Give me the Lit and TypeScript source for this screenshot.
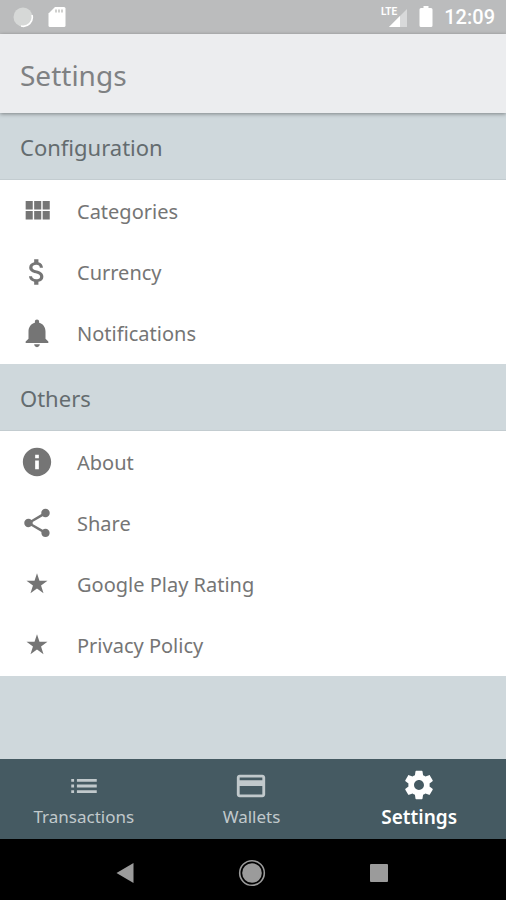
import { LitElement, html, css, svg } from "lit";
import { customElement } from "lit/decorators.js";

const icon = (body: unknown) => html`<svg class="icon" viewBox="0 0 24 24" aria-hidden="true">${body}</svg>`;

const icons = {
  grid: icon(svg`<path d="M4 11h5V5H4v6zm0 7h5v-6H4v6zm6 0h5v-6h-5v6zm6 0h5v-6h-5v6zm-6-7h5V5h-5v6zm6-6v6h5V5h-5z"/>`),
  money: icon(svg`<path d="M11.8 10.9c-2.27-.59-3-1.2-3-2.15 0-1.09 1.01-1.85 2.7-1.85 1.78 0 2.44.85 2.5 2.1h2.21c-.07-1.72-1.12-3.3-3.21-3.81V3h-3v2.16c-1.94.42-3.5 1.68-3.5 3.61 0 2.31 1.91 3.46 4.7 4.13 2.5.6 3 1.48 3 2.41 0 .69-.49 1.79-2.7 1.79-2.06 0-2.87-.92-2.98-2.1h-2.2c.12 2.19 1.76 3.42 3.68 3.83V21h3v-2.15c1.95-.37 3.5-1.5 3.5-3.55 0-2.84-2.43-3.81-4.7-4.4z"/>`),
  bell: icon(svg`<path d="M12 22c1.1 0 2-.9 2-2h-4c0 1.1.89 2 2 2zm6-6v-5c0-3.07-1.64-5.64-4.5-6.32V4c0-.83-.67-1.5-1.5-1.5s-1.5.67-1.5 1.5v.68C7.63 5.36 6 7.92 6 11v5l-2 2v1h16v-1l-2-2z"/>`),
  info: icon(svg`<path d="M12 2C6.48 2 2 6.48 2 12s4.48 10 10 10 10-4.48 10-10S17.52 2 12 2zm1.3 15.2h-2.6V11h2.6v6.2zm0-7.8h-2.6V6.8h2.6v2.600z"/>`),
  share: icon(svg`<path d="M18 16.08c-.76 0-1.44.3-1.96.77L8.91 12.7c.05-.23.09-.46.09-.7s-.04-.47-.09-.7l7.05-4.11c.54.5 1.25.81 2.04.81 1.66 0 3-1.34 3-3s-1.34-3-3-3-3 1.34-3 3c0 .24.04.47.09.7L8.04 9.81C7.5 9.31 6.79 9 6 9c-1.66 0-3 1.34-3 3s1.34 3 3 3c.79 0 1.5-.31 2.04-.81l7.12 4.16c-.05.21-.08.43-.08.65 0 1.61 1.31 2.92 2.92 2.92s2.92-1.31 2.92-2.92-1.31-2.92-2.92-2.92z"/>`),
  star: icon(svg`<path d="M12 4.400l1.750 5.300h5.650l-4.550 3.400 1.750 5.500-4.600-3.400-4.600 3.400 1.750-5.500-4.550-3.400h5.650z"/>`),
  list: icon(svg`<path d="M3 13h2v-2H3v2zm0 4h2v-2H3v2zm0-8h2V7H3v2zm4 4h14v-2H7v2zm0 4h14v-2H7v2zM7 7v2h14V7H7z"/>`),
  card: icon(svg`<path d="M20 4H4c-1.11 0-1.99.89-1.99 2L2 18c0 1.11.89 2 2 2h16c1.11 0 2-.89 2-2V6c0-1.11-.89-2-2-2zm0 14H4v-6h16v6zm0-10H4V6h16v2z"/>`),
  gear: icon(svg`<path d="M19.43 12.98c.04-.32.07-.64.07-.98s-.03-.66-.07-.98l2.11-1.65c.19-.15.24-.42.12-.64l-2-3.46c-.12-.22-.39-.3-.61-.22l-2.49 1c-.52-.4-1.08-.73-1.69-.98l-.38-2.65C14.46 2.18 14.25 2 14 2h-4c-.25 0-.46.18-.49.42l-.38 2.65c-.61.25-1.17.59-1.69.98l-2.49-1c-.23-.09-.49 0-.61.22l-2 3.46c-.13.22-.07.49.12.64l2.11 1.65c-.04.32-.07.65-.07.98s.03.66.07.98l-2.11 1.65c-.19.15-.24.42-.12.64l2 3.46c.12.22.39.3.61.22l2.49-1c.52.4 1.08.73 1.69.98l.38 2.65c.03.24.24.42.49.42h4c.25 0 .46-.18.49-.42l.38-2.65c.61-.25 1.17-.59 1.69-.98l2.49 1c.23.09.49 0 .61-.22l2-3.46c.12-.22.07-.49-.12-.64l-2.11-1.65zM12 15.5c-1.93 0-3.5-1.57-3.5-3.5s1.57-3.5 3.5-3.5 3.5 1.57 3.5 3.5-1.57 3.5-3.5 3.5z"/>`),
};

const sections = [
  {
    title: "Configuration",
    items: [
      { label: "Categories", icon: icons.grid },
      { label: "Currency", icon: icons.money },
      { label: "Notifications", icon: icons.bell },
    ],
  },
  {
    title: "Others",
    items: [
      { label: "About", icon: icons.info },
      { label: "Share", icon: icons.share },
      { label: "Google Play Rating", icon: icons.star },
      { label: "Privacy Policy", icon: icons.star },
    ],
  },
];

const tabs = [
  { label: "Transactions", icon: icons.list, active: false },
  { label: "Wallets", icon: icons.card, active: false },
  { label: "Settings", icon: icons.gear, active: true },
];

@customElement("app-root")
export class AppRoot extends LitElement {
  static styles = css`
    :host {
      display: flex;
      flex-direction: column;
      min-height: 100vh;
      background: #cfd8dc;
      color: #757575;
      font-family: "Noto Sans", "Open Sans", sans-serif;
    }
    * { box-sizing: border-box; }
    h1, h2, ul { margin: 0; padding: 0; font-weight: 400; }
    ul { list-style: none; }
    button {
      border: 0;
      margin: 0;
      padding: 0;
      background: none;
      color: inherit;
      font: inherit;
      cursor: pointer;
    }
    svg { display: block; flex: none; }
    .icon { width: 34px; height: 34px; fill: currentColor; }
    .status {
      display: flex;
      align-items: center;
      gap: 11px;
      height: 34px;
      padding: 0 11px 0 12px;
      background: #bbbcbd;
      color: #fff;
      font: 500 20px/24px Roboto, sans-serif;
    }
    .left { display: flex; align-items: center; gap: 14px; margin-right: auto; }
    .network { font: 700 10px Roboto, sans-serif; }
    .header {
      display: flex;
      align-items: center;
      height: 79px;
      padding: 2px 20px 0;
      background: #ecedef;
      box-shadow: 0 1px 4px rgba(0, 0, 0, 0.4);
      z-index: 1;
    }
    .title { font-size: 28px; line-height: 36px; color: #7f8183; }
    .main { flex: 1; }
    .section {
      height: 66px;
      padding: 0 20px;
      font-size: 22px;
      line-height: 68px;
      color: #646c6f;
    }
    .list { background: #fff; padding-bottom: 1px; border-top: 1px solid #c3ccd0; }
    .row {
      display: flex;
      align-items: center;
      gap: 23px;
      width: 100%;
      height: 61px;
      padding: 0 20px;
      font-size: 20px;
      line-height: 28px;
      text-align: left;
    }
    .row span { padding-top: 2px; }
    .tabs {
      display: grid;
      grid-template-columns: 1fr 1fr 1fr;
      height: 80px;
      padding-right: 3px;
      background: #455a62;
      color: #c1c9cc;
    }
    .tab {
      display: flex;
      flex-direction: column;
      align-items: center;
      justify-content: center;
      gap: 2px;
      font-size: 17px;
      line-height: 24px;
    }
    .tab.active { color: #fff; font-size: 19px; line-height: 26px; font-weight: 600; }
    .system {
      display: flex;
      justify-content: center;
      align-items: center;
      gap: 99px;
      height: 61px;
      padding: 6px 2px 0 0;
      background: #000;
    }
    .key { height: 28px; }
  `;

  render() {
    return html`
      <div class="status">
        <div class="left">
          <svg width="22" height="22" viewBox="0 0 22 22" aria-hidden="true">
            <circle cx="11" cy="11" r="9.500" fill="#d6d8d7" />
            <path d="M20 9a9 9 0 0 1-11 11" fill="none" stroke="#fff" stroke-width="1.600" />
          </svg>
          <svg width="18" height="22" viewBox="0 0 18 22" aria-hidden="true">
            <path d="M7 1h9q1.500 0 1.500 1.500v17q0 1.500-1.500 1.500H2q-1.500 0-1.500-1.500V7.500z" fill="#fff" />
            <path d="M8 3.500v3M11 3.500v3M14 3.500v3" stroke="#cfd0ce" stroke-width="2" />
          </svg>
        </div>
        <svg width="27" height="22" viewBox="0 0 27 22" aria-hidden="true">
          <path d="M26 3v18H8z" fill="#d8d9da" />
          <path d="M19 10v11H8z" fill="#fff" />
          <text class="network" x="0" y="9" fill="#fff">LTE</text>
        </svg>
        <svg width="14" height="22" viewBox="0 0 14 22" aria-hidden="true">
          <path d="M4.500 0h5v2H12q1.500 0 1.500 1.500v16q0 1.500-1.500 1.500H2q-1.500 0-1.500-1.500v-16Q.5 2 2 2h2.500z" fill="#fff" />
        </svg>
        <span>12:09</span>
      </div>
      <header class="header"><h1 class="title">Settings</h1></header>
      <main class="main">
        ${sections.map(
          (s) => html`
            <h2 class="section">${s.title}</h2>
            <ul class="list">
              ${s.items.map((i) => html`<li><button class="row">${i.icon}<span>${i.label}</span></button></li>`)}
            </ul>
          `
        )}
      </main>
      <nav class="tabs">
        ${tabs.map((t) => html`<button class="tab ${t.active ? "active" : ""}">${t.icon}<span>${t.label}</span></button>`)}
      </nav>
      <div class="system">
        <button class="key" aria-label="Back">
          <svg width="28" height="28" viewBox="0 0 28 28"><path d="M5.500 14 22.500 4v20z" fill="#9b9b9b" /></svg>
        </button>
        <button class="key" aria-label="Home">
          <svg width="28" height="28" viewBox="0 0 28 28">
            <circle cx="14" cy="14" r="12.300" fill="none" stroke="#9b9b9b" stroke-width="1.600" />
            <circle cx="14" cy="14" r="9.800" fill="#9b9b9b" />
          </svg>
        </button>
        <button class="key" aria-label="Recent apps">
          <svg width="28" height="28" viewBox="0 0 28 28"><rect x="5" y="5" width="18" height="18" rx="1" fill="#9b9b9b" /></svg>
        </button>
      </div>
    `;
  }
}
